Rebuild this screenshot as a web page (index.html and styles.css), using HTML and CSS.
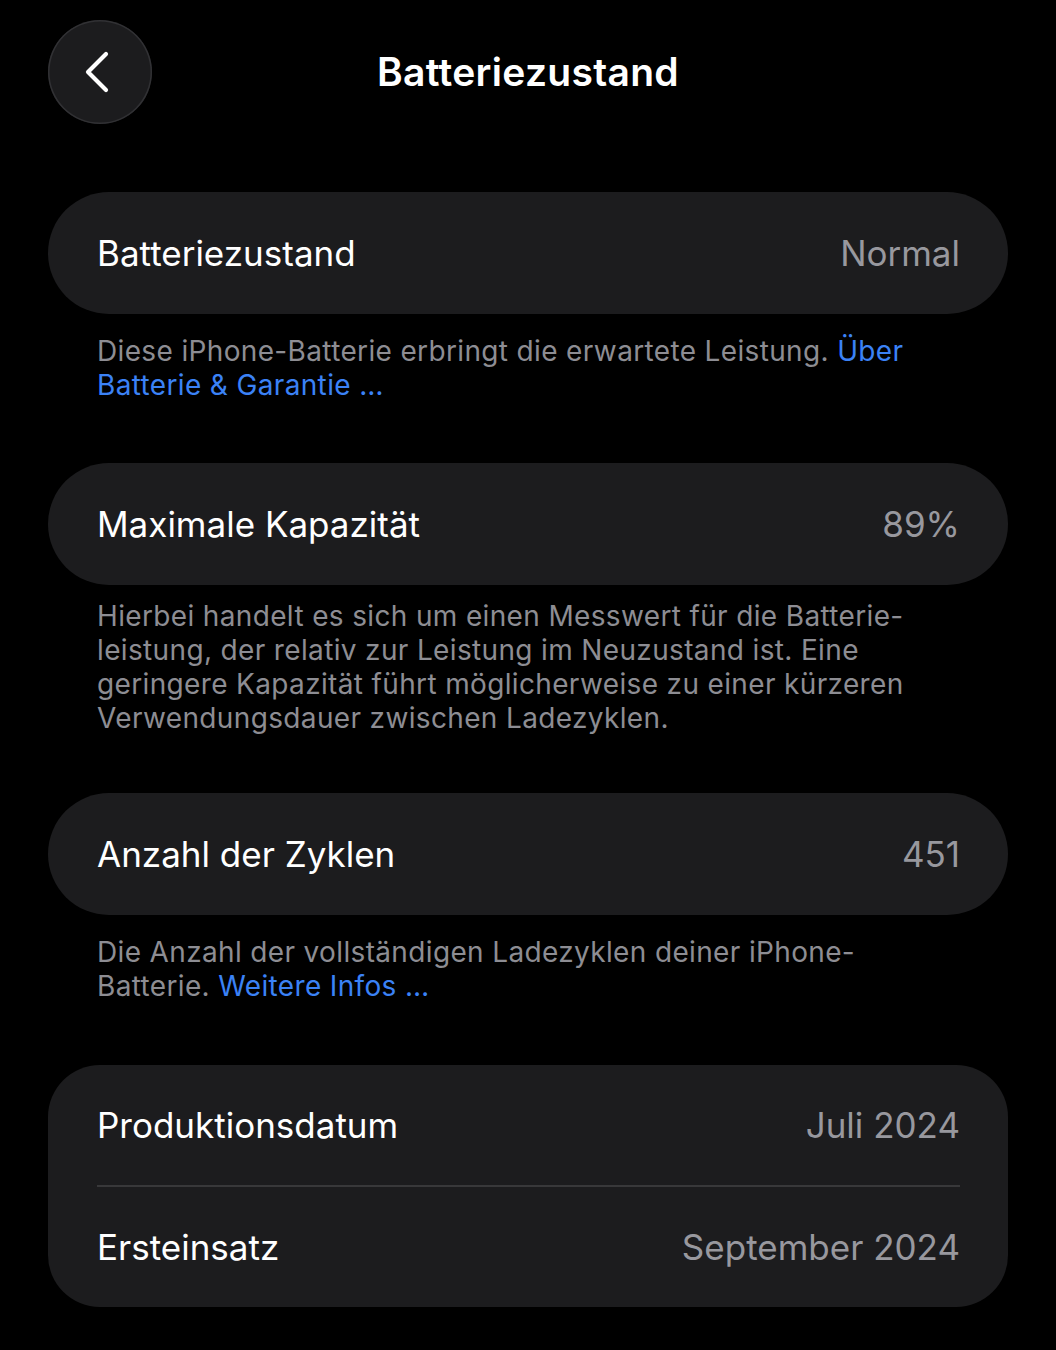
FILE: index.html
```html
<!DOCTYPE html>
<html>

<head>
    <title>Batteriezustand</title>
    <link rel="stylesheet" href="styles.css">
</head>

<body>
    <div class="screen">
        <header class="nav">
            <a class="back" href="#">
                <svg width="30" height="42" viewBox="0 0 30 42">
                    <path d="M24 3 L6 21 L24 39" fill="none" stroke="#fff" stroke-width="4.2" stroke-linecap="round" stroke-linejoin="round" />
                </svg>
            </a>
            <h1>Batteriezustand</h1>
        </header>

        <div class="group">
            <div class="row">
                <span class="label">Batteriezustand</span>
                <span class="value">Normal</span>
            </div>
        </div>
        <p class="note">Diese iPhone-Batterie erbringt die erwartete Leistung. <a href="#">Über<br>Batterie &amp; Garantie …</a></p>

        <div class="group">
            <div class="row">
                <span class="label">Maximale Kapazität</span>
                <span class="value">89%</span>
            </div>
        </div>
        <p class="note note-tight">Hierbei handelt es sich um einen Messwert für die Batterie-<br>leistung, der relativ zur Leistung im Neuzustand ist. Eine<br>geringere Kapazität führt möglicherweise zu einer kürzeren<br>Verwendungsdauer zwischen Ladezyklen.</p>

        <div class="group">
            <div class="row">
                <span class="label">Anzahl der Zyklen</span>
                <span class="value">451</span>
            </div>
        </div>
        <p class="note note-last">Die Anzahl der vollständigen Ladezyklen deiner iPhone-<br>Batterie. <a href="#">Weitere Infos …</a></p>

        <div class="group group-multi">
            <div class="row">
                <span class="label">Produktionsdatum</span>
                <span class="value">Juli 2024</span>
            </div>
            <div class="divider"></div>
            <div class="row">
                <span class="label">Ersteinsatz</span>
                <span class="value">September 2024</span>
            </div>
        </div>
    </div>
</body>

</html>
```

FILE: styles.css
```css
body {
    margin: 0;
    padding: 0;
    background-color: #000;
    font-family: Inter, "Noto Sans", sans-serif;
    color: #fff;
}

.screen {
    padding: 19px 48px 40px 48px;
}

.nav {
    display: flex;
    align-items: center;
    height: 106px;
    position: relative;
    margin-bottom: 67px;
}

.back {
    width: 104px;
    height: 104px;
    border-radius: 50%;
    background-color: #1c1c1e;
    box-shadow: inset 0 0 0 1.5px #313134;
    display: flex;
    align-items: center;
    justify-content: center;
    padding-right: 6px;
    box-sizing: border-box;
}

.nav h1 {
    position: absolute;
    left: 0;
    right: 0;
    top: 0;
    margin: 0;
    line-height: 106px;
    text-align: center;
    font-size: 39px;
    font-weight: 600;
    letter-spacing: 0.3px;
    pointer-events: none;
}

.group {
    background-color: #1c1c1e;
    border-radius: 61px;
    padding: 0 48px 0 49px;
}

.group-multi {
    border-radius: 52px;
}

.row {
    display: flex;
    justify-content: space-between;
    align-items: center;
    height: 122px;
    font-size: 35px;
    letter-spacing: 0;
}

.group-multi .row {
    height: 120px;
}

.value {
    color: #98989e;
}

.divider {
    height: 2px;
    background-color: #38383a;
}

.note {
    margin: 20px 0 61px 0;
    padding-left: 49px;
    font-size: 28px;
    line-height: 34px;
    color: #8d8d93;
    letter-spacing: 0.35px;
    white-space: nowrap;
}

.note-tight {
    margin-top: 14px;
    margin-bottom: 58px;
}

.note-last {
    margin-bottom: 62px;
}

.note a {
    color: #3b82f6;
    text-decoration: none;
}
```
